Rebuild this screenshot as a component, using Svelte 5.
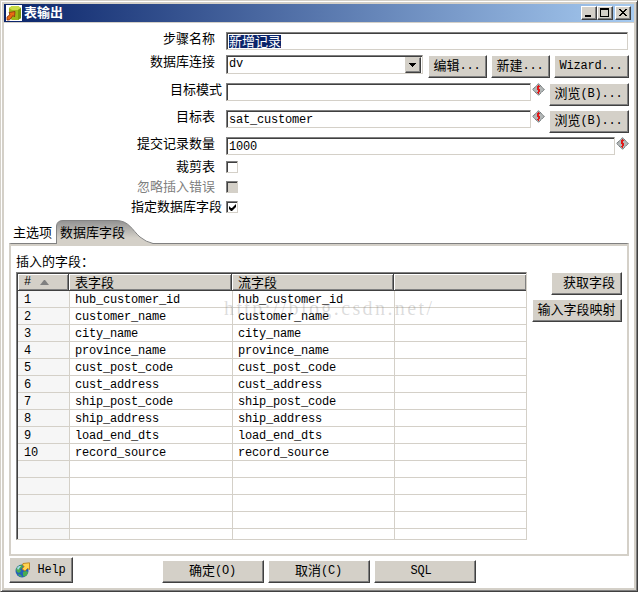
<script lang="ts">
  const fields = [
    "hub_customer_id",
    "customer_name",
    "city_name",
    "province_name",
    "cust_post_code",
    "cust_address",
    "ship_post_code",
    "ship_address",
    "load_end_dts",
    "record_source",
  ];
  const emptyRows = 5;

  let stepName = $state("新增记录");
  let table = $state("sat_customer");
  let commitSize = $state("1000");
</script>

{#snippet variable()}
  <svg class="variable" width="13" height="13" viewBox="0 0 13 13">
    <path d="M6.5 .7 12.3 6.5 6.5 12.3 .7 6.5Z" fill="#b4b8b8" stroke="#4d5658" stroke-dasharray="1.3 .5" />
    <path d="M5 3h3v1H6v2h2v3H7v1H5V9h1V7H5z" fill="#e01818" />
    <path d="M6 2h1v9H6z" fill="#e01818" />
  </svg>
{/snippet}

<div class="window">
  <header>
    <svg class="app-icon" width="16" height="16" viewBox="0 0 16 16">
      <path fill="#fff" d="M0 0h16v16H0z" />
      <path d="M3 3 6 1h6l3 2v10l-3 2H6l-3-2z" fill="#9cb817" />
      <path d="M3 3 6 1h6l3 2-3 2H6z" fill="#c9dc45" />
      <path d="M12 5l3-2v10l-3 2z" fill="#79970c" />
      <path d="M3 7.500 9 6.500 8.500 12 7 10.500 3.500 15H1v-3l3-2.500z" fill="#e86b12" stroke="#8c2e10" stroke-width=".8" />
    </svg>
    <h1>表输出</h1>
    <div class="controls">
      <button class="control" aria-label="最小化">
        <svg width="14" height="12" viewBox="0 0 14 12"><path d="M3 8h6v2H3z" /></svg>
      </button>
      <button class="control" aria-label="最大化">
        <svg width="14" height="12" viewBox="0 0 14 12"><path d="M2 1h9v9H2zM3 3v6h7V3z" fill-rule="evenodd" /></svg>
      </button>
      <button class="control close" aria-label="关闭">
        <svg width="14" height="12" viewBox="0 0 14 12" shape-rendering="crispEdges">
          <path d="M3 2h2v1h1v1h2V3h1V2h2v1h-1v1H9v1H8v1h1v1h1v1h1v1H9V8H8V7H6v1H5v1H3V8h1V7h1V6h1V5H5V4H4V3H3z" />
        </svg>
      </button>
    </div>
  </header>

  <main>
    <div class="row name">
      <span class="label">步骤名称</span>
      <div class="input wide"><span class="selected"><b>{stepName}</b></span></div>
    </div>
    <div class="row connection">
      <span class="label">数据库连接</span>
      <div class="input combo">
        <span class="latin">dv</span>
        <button class="arrow" aria-label="展开">
          <svg width="7" height="4" viewBox="0 0 7 4"><path d="M0 0h7v1H6v1H5v1H4v1H3V3H2V2H1V1H0z" /></svg>
        </button>
      </div>
      <button class="edit">编辑<span class="latin">...</span></button>
      <button class="new">新建<span class="latin">...</span></button>
      <button class="wizard"><span class="latin">Wizard...</span></button>
    </div>
    <div class="row">
      <span class="label near">目标模式</span>
      <div class="input target"></div>
      {@render variable()}
      <button class="browse">浏览<span class="latin">(B)...</span></button>
    </div>
    <div class="row">
      <span class="label">目标表</span>
      <div class="input target"><span class="latin">{table}</span></div>
      {@render variable()}
      <button class="browse">浏览<span class="latin">(B)...</span></button>
    </div>
    <div class="row commit">
      <span class="label">提交记录数量</span>
      <div class="input size"><span class="latin">{commitSize}</span></div>
      {@render variable()}
    </div>
    <div class="row check">
      <span class="label">裁剪表</span>
      <span class="box"></span>
    </div>
    <div class="row check">
      <span class="label disabled">忽略插入错误</span>
      <span class="box disabled"></span>
    </div>
    <div class="row last">
      <span class="label near">指定数据库字段</span>
      <span class="box">
        <svg width="7" height="7" viewBox="0 0 7 7"><path d="M0 2v3l2 2h1l4-4V0L3 4H2z" /></svg>
      </span>
    </div>

    <nav>
      <span class="tab">主选项</span>
      <span class="tab active">
        <svg width="98" height="24" viewBox="0 0 98 24">
          <defs>
            <linearGradient id="tab-fill" x1="0" y1="0" x2="0" y2="1">
              <stop offset="0" stop-color="#929292" />
              <stop offset=".75" stop-color="#d4d0c8" />
            </linearGradient>
          </defs>
          <path d="M.5 24V6Q1 .5 7 .5H60C73 .5 76 10 84 17Q90 22 97 23.500V24Z" fill="url(#tab-fill)" />
          <path d="M.5 24V6Q1 .5 7 .5H60C73 .5 76 10 84 17Q90 22 97 23.500" fill="none" stroke="#848484" />
        </svg>
        <b>数据库字段</b>
      </span>
    </nav>

    <section>
      <div class="fields">
        <p>插入的字段：</p>
        <div class="grid">
          <div class="line head">
            <span class="latin">#<svg width="9" height="5" viewBox="0 0 9 5"><path d="M4 0h1l4 5H0z" fill="#808080" /></svg></span>
            <span>表字段</span>
            <span>流字段</span>
            <span></span>
          </div>
          {#each fields as field, i (field)}
            <div class="line latin">
              <span>{i + 1}</span>
              <span>{field}</span>
              <span>{field}</span>
              <span></span>
            </div>
          {/each}
          {#each { length: emptyRows } as _}
            <div class="line"><span></span><span></span><span></span><span></span></div>
          {/each}
        </div>
        <div class="watermark">http://blog.csdn.net/</div>
      </div>
      <div class="side">
        <button class="get">获取字段</button>
        <button class="map">输入字段映射</button>
      </div>
    </section>

    <footer>
      <button class="help">
        <svg width="16" height="16" viewBox="0 0 16 16">
          <circle cx="7" cy="9" r="6.500" fill="#2462b8" />
          <path d="M1 7Q3 3 7 3L8 5 5 7 6 9 4 11 2 10zM8 10l3-1 2 1-1 3-3 2-1-2zM3 12l3 1 1 2-3-1z" fill="#48ad50" />
          <path d="M2 6 4 4 6 4 3 8z" fill="#a7d6ef" />
          <path d="M8 1.500 14.500.8V7.500L12.500 6.500 10 9 7 7 9 4.500 7.500 3z" fill="#ffd350" stroke="#b9780d" stroke-width=".8" />
        </svg>
        <span class="latin">Help</span>
      </button>
      <button class="action">确定<span class="latin">(O)</span></button>
      <button class="action">取消<span class="latin">(C)</span></button>
      <button class="action sql"><span class="latin">SQL</span></button>
    </footer>
  </main>
</div>

<style>
  :global(body) {
    margin: 0;
    background: #fff;
  }
  .window {
    box-sizing: border-box;
    width: 638px;
    height: 592px;
    border: 1px solid #d4d0c8;
    border-right-color: #404040;
    border-bottom-color: #404040;
    padding: 3px;
    box-shadow:
      inset 1px 1px #fff,
      inset -1px -1px #808080,
      inset 0 0 0 3px #d4d0c8;
    color: #000;
    font: 13px/13px "Noto Sans CJK SC", sans-serif;
    overflow: hidden;
  }
  svg {
    display: block;
    flex: none;
  }
  b {
    font-weight: 400;
  }
  .latin {
    font: 12px/13px "Liberation Mono", monospace;
    letter-spacing: -0.2px;
    white-space: nowrap;
  }
  header {
    display: flex;
    height: 18px;
    padding: 0 3px 0 2px;
    border-bottom: 1px solid #d4d0c8;
    background: linear-gradient(90deg, #0a246a, #a6caf0);
    background-clip: padding-box;
  }
  .app-icon {
    margin-top: 1px;
  }
  h1 {
    margin: 1px 0 0 2px;
    color: #fff;
    font-size: 13px;
    line-height: 13px;
  }
  .controls {
    display: flex;
    margin: 2px 0 0 auto;
  }
  button {
    display: flex;
    box-sizing: border-box;
    flex: none;
    align-items: center;
    justify-content: center;
    height: 23px;
    padding: 0 1px 4px 0;
    border: 1px solid #fff;
    border-right-color: #404040;
    border-bottom-color: #404040;
    box-shadow: inset -1px -1px #808080;
    background: #d4d0c8;
    color: inherit;
    font: inherit;
    white-space: nowrap;
  }
  button .latin {
    padding-top: 4px;
  }
  .control {
    width: 16px;
    height: 14px;
    padding: 0;
  }
  .close {
    margin-left: 2px;
  }
  main {
    padding: 9px 5px 0;
  }
  .row {
    display: flex;
    height: 27px;
    align-items: flex-start;
  }
  .name {
    height: 23px;
  }
  .connection {
    height: 28px;
  }
  .commit {
    height: 24px;
  }
  .check {
    height: 20px;
  }
  .last {
    height: 19px;
  }
  .label {
    box-sizing: border-box;
    flex: none;
    width: 217px;
    margin-top: -1px;
    padding-right: 11px;
    text-align: right;
  }
  .check .label,
  .last .label {
    margin-top: -2px;
  }
  .near {
    padding-right: 4px;
  }
  .label.disabled {
    color: #808080;
  }
  .input,
  .box {
    box-sizing: border-box;
    border: 1px solid #808080;
    border-right-color: #d4d0c8;
    border-bottom-color: #d4d0c8;
    box-shadow: inset 1px 1px #404040;
    background: #fff;
  }
  .input {
    display: flex;
    height: 18px;
    align-items: flex-start;
    padding: 2px 0 0 2px;
  }
  .input .latin {
    margin-top: 1px;
  }
  .wide {
    width: 402px;
  }
  .selected {
    height: 13px;
    background: #0a246a;
    color: #fff;
  }
  .selected b {
    display: block;
    margin-top: -1px;
  }
  .combo {
    width: 197px;
    height: 19px;
    justify-content: space-between;
    padding: 1px 1px 0 2px;
  }
  .arrow {
    width: 16px;
    height: 16px;
    padding-bottom: 1px;
    border-top-color: #d4d0c8;
    border-left-color: #d4d0c8;
  }
  .edit {
    width: 59px;
    margin-left: 5px;
  }
  .new {
    width: 59px;
    margin-left: 4px;
  }
  .wizard {
    width: 75px;
    margin-left: 4px;
  }
  .target {
    width: 305px;
  }
  .variable {
    margin-left: 1px;
  }
  .browse {
    width: 80px;
    margin-left: 4px;
  }
  .size {
    width: 389px;
  }
  .box {
    width: 12px;
    height: 12px;
    padding: 2px 0 0 2px;
  }
  .box.disabled {
    background: #d4d0c8;
  }
  nav {
    display: flex;
    height: 23px;
  }
  .tab {
    width: 43px;
    padding: 5px 0 0 4px;
  }
  .active {
    position: relative;
    width: 92px;
  }
  .active svg {
    position: absolute;
    top: 0;
    left: 0;
  }
  .active b {
    position: relative;
  }
  section {
    display: flex;
    box-sizing: border-box;
    height: 313px;
    padding: 0 5px;
    border: 2px solid #d4d0c8;
    border-top: 1px solid #808080;
    box-shadow: inset 0 2px #d4d0c8;
  }
  .fields {
    position: relative;
    width: 511px;
  }
  p {
    height: 18px;
    margin: 10px 0 0;
  }
  .grid {
    box-sizing: border-box;
    height: 268px;
    padding: 1px 0 0 1px;
    border: 1px solid #808080;
    border-right-color: #d4d0c8;
    border-bottom-color: #d4d0c8;
    box-shadow: inset 1px 1px #404040;
    overflow: hidden;
  }
  .line {
    display: grid;
    grid-template-columns: 52px 163px 162px 1fr;
    height: 17px;
  }
  .line span {
    box-sizing: border-box;
    padding: 3px 0 0 5px;
    border-right: 1px solid #d4d0c8;
    border-bottom: 1px solid #d4d0c8;
  }
  .line span:first-child {
    padding-left: 6px;
    background: #f6f6f6;
  }
  .line span:last-child {
    border-right: none;
  }
  .line.head {
    grid-template-columns: 51px 163px 162px 1fr;
  }
  .head span,
  .head span:first-child {
    padding-top: 1px;
    padding-left: 6px;
    border-color: #404040;
    box-shadow:
      inset 1px 1px #fff,
      inset -1px -1px #808080;
    background: #d4d0c8;
  }
  .head span:first-child {
    display: flex;
    gap: 9px;
    padding-top: 2px;
  }
  .head svg {
    margin-top: 4px;
  }
  .watermark {
    position: absolute;
    top: 52px;
    left: 208px;
    color: rgb(120 120 120 / 26%);
    font: 20px/24px "Liberation Serif", serif;
    letter-spacing: 2.4px;
    pointer-events: none;
  }
  .side {
    display: flex;
    flex: 1;
    flex-direction: column;
    align-items: flex-end;
    gap: 4px;
    padding-top: 28px;
  }
  .get {
    width: 71px;
    justify-content: flex-end;
    padding-right: 6px;
  }
  .map {
    width: 90px;
  }
  footer {
    display: flex;
    align-items: flex-end;
    gap: 4px;
    height: 27px;
  }
  .help {
    width: 64px;
    height: 26px;
    gap: 6px;
    margin-right: 85px;
    padding-bottom: 1px;
  }
  .help .latin {
    padding-top: 2px;
  }
  .action {
    width: 102px;
  }
  .sql {
    padding-right: 8px;
  }
</style>
